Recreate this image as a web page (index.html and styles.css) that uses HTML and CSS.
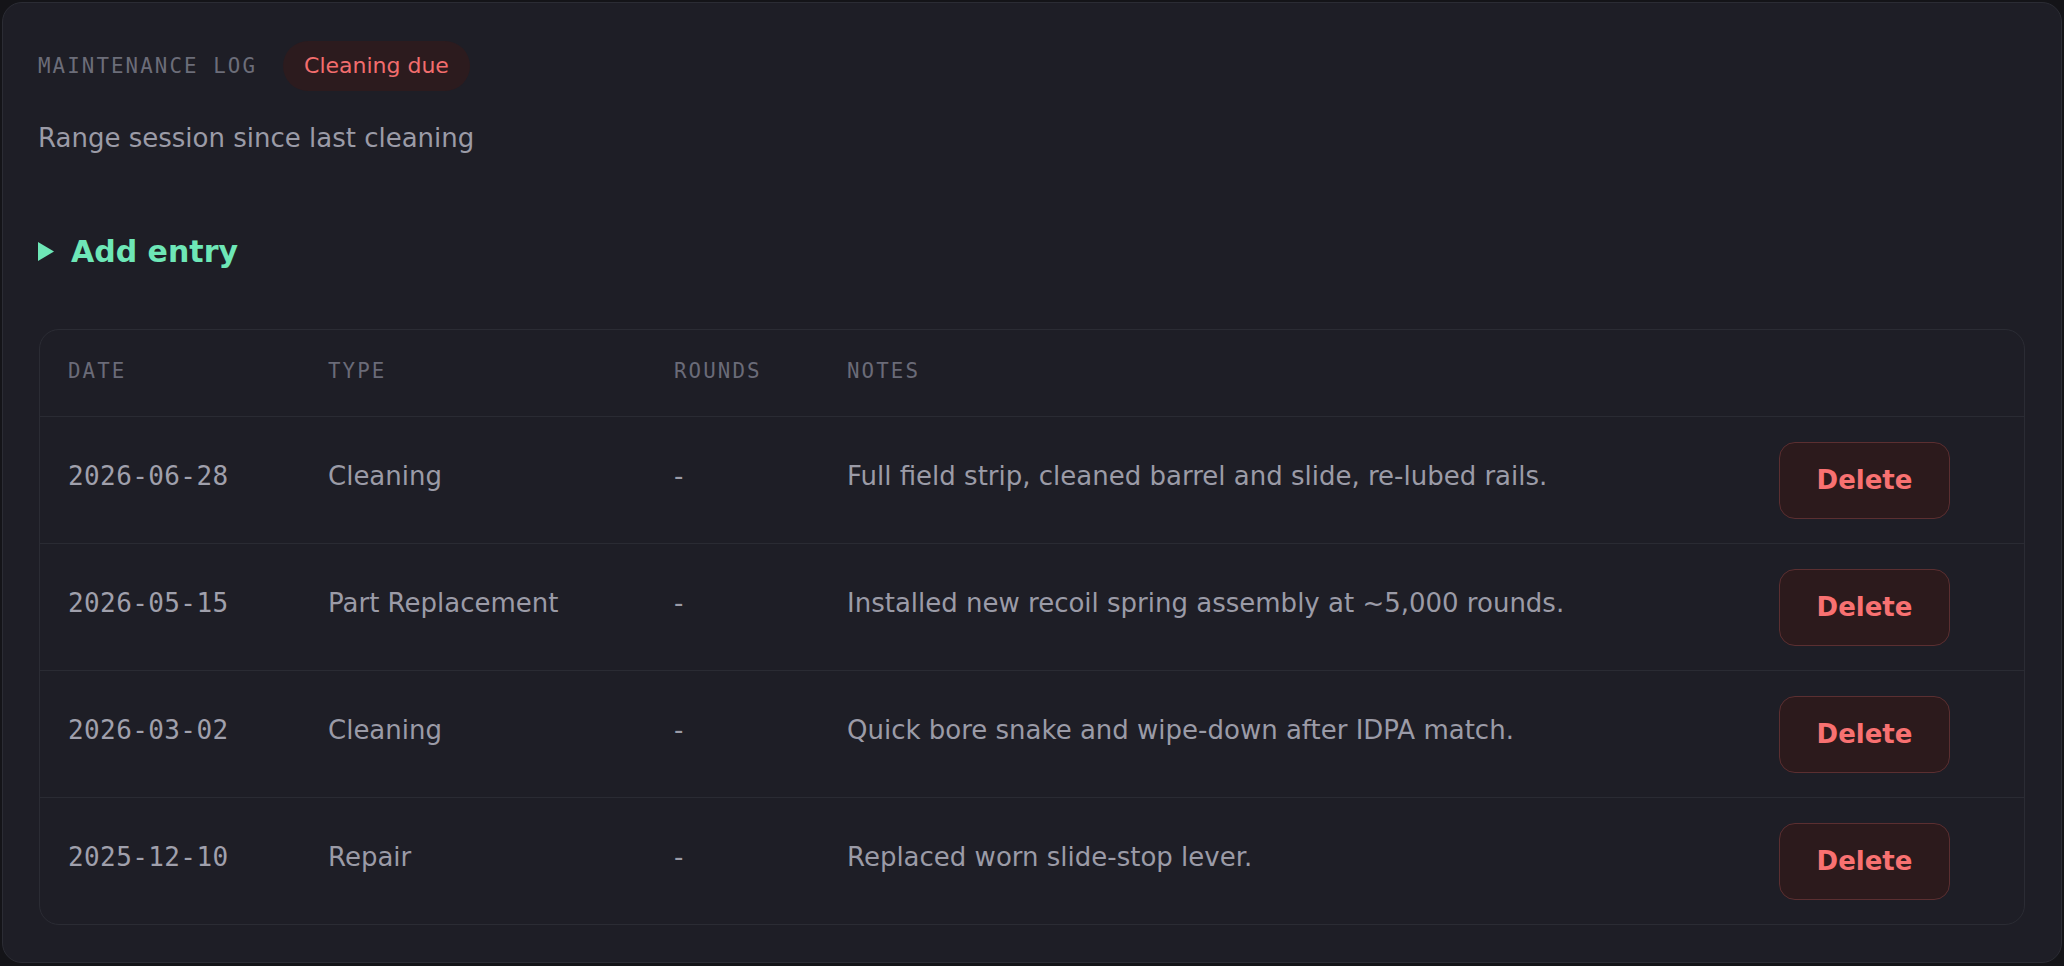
FILE: index.html
```html
<!DOCTYPE html>
<html lang="en">
<head>
<meta charset="utf-8">
<title>Maintenance log</title>
<link rel="stylesheet" href="styles.css">
</head>
<body>
<div class="page">
  <section class="card">
    <div class="card-head">
      <span class="eyebrow">MAINTENANCE LOG</span>
      <span class="pill">Cleaning due</span>
    </div>
    <p class="subtitle">Range session since last cleaning</p>

    <details class="add-entry">
      <summary>
        <svg class="caret" width="16" height="19" viewBox="0 0 16 19" aria-hidden="true"><polygon points="0,0 16,9.5 0,19" fill="currentColor"/></svg>
        <span>Add entry</span>
      </summary>
    </details>

    <div class="log">
      <div class="log-row log-head">
        <div class="cell">DATE</div>
        <div class="cell">TYPE</div>
        <div class="cell">ROUNDS</div>
        <div class="cell">NOTES</div>
        <div class="cell action"></div>
      </div>
      <div class="log-row">
        <div class="cell date">2026-06-28</div>
        <div class="cell">Cleaning</div>
        <div class="cell">-</div>
        <div class="cell">Full field strip, cleaned barrel and slide, re-lubed rails.</div>
        <div class="cell action"><button class="btn-delete" type="button">Delete</button></div>
      </div>
      <div class="log-row">
        <div class="cell date">2026-05-15</div>
        <div class="cell">Part Replacement</div>
        <div class="cell">-</div>
        <div class="cell">Installed new recoil spring assembly at ~5,000 rounds.</div>
        <div class="cell action"><button class="btn-delete" type="button">Delete</button></div>
      </div>
      <div class="log-row">
        <div class="cell date">2026-03-02</div>
        <div class="cell">Cleaning</div>
        <div class="cell">-</div>
        <div class="cell">Quick bore snake and wipe-down after IDPA match.</div>
        <div class="cell action"><button class="btn-delete" type="button">Delete</button></div>
      </div>
      <div class="log-row">
        <div class="cell date">2025-12-10</div>
        <div class="cell">Repair</div>
        <div class="cell">-</div>
        <div class="cell">Replaced worn slide-stop lever.</div>
        <div class="cell action"><button class="btn-delete" type="button">Delete</button></div>
      </div>
    </div>
  </section>
</div>
</body>
</html>
```

FILE: styles.css
```css
* { box-sizing: border-box; }

html, body {
  margin: 0;
  background: #141418;
}

body {
  font-family: "DejaVu Sans", Verdana, sans-serif;
  color: #9b9ba7;
}

.page {
  padding: 2px 2px 3px 2px;
}

.card {
  background: #1e1e26;
  border: 1px solid #2b2c34;
  border-radius: 20px;
  padding: 38px 36px 37px 35px;
}

.card-head {
  display: flex;
  align-items: center;
  gap: 26px;
}

.eyebrow {
  font-family: "DejaVu Sans Mono", monospace;
  font-size: 20.8px;
  letter-spacing: 0.1em;
  color: #6c6d79;
}

.pill {
  font-size: 22px;
  line-height: 26px;
  padding: 12px 21px;
  border-radius: 25px;
  background: #2c1b1e;
  color: #f26d6d;
}

.subtitle {
  margin: 32px 0 0 0;
  font-size: 26px;
  color: #9b9ba7;
}

.add-entry {
  margin-top: 81px;
}

.add-entry summary {
  list-style: none;
  display: flex;
  align-items: center;
  gap: 17px;
  font-size: 30px;
  font-weight: bold;
  color: #6ee7b7;
  cursor: pointer;
}

.add-entry summary::-webkit-details-marker { display: none; }

.caret { display: block; }

.log {
  margin-top: 60px;
  margin-left: 1px;
  border: 1px solid #2b2c34;
  border-radius: 20px;
  overflow: hidden;
}

.log-row {
  display: grid;
  grid-template-columns: 260px 346px 173px 1fr 273px;
  align-items: center;
  height: 127px;
  border-top: 1px solid #2a2b33;
  font-size: 26px;
}

.log-head {
  height: 86px;
  border-top: none;
  font-family: "DejaVu Sans Mono", monospace;
  font-size: 20.8px;
  letter-spacing: 0.1em;
  color: #6a6b78;
}

.cell {
  padding: 0 28px 9px 28px;
}

.log-head .cell {
  padding-bottom: 4px;
}

.cell.action {
  padding-bottom: 0;
}

.date {
  font-family: "DejaVu Sans Mono", monospace;
  letter-spacing: 0.4px;
  color: #a0a0ac;
}

.btn-delete {
  font-family: "DejaVu Sans", Verdana, sans-serif;
  font-size: 26px;
  font-weight: bold;
  line-height: 30px;
  height: 77px;
  width: 171px;
  padding: 0;
  border: 1.5px solid #5b2f31;
  border-radius: 16px;
  background: #2c1a1c;
  color: #f87171;
  cursor: pointer;
}
```
